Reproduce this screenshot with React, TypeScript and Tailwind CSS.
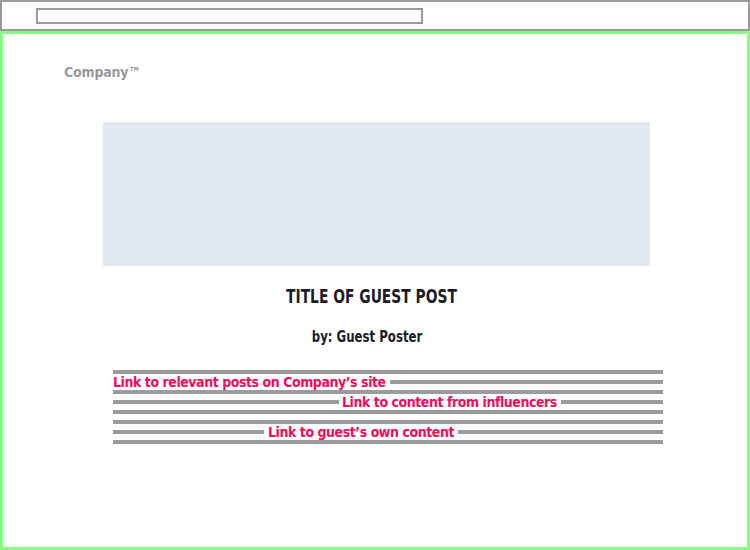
import React from "react";

const FONT = { fontFamily: '"DejaVu Sans Condensed", "DejaVu Sans", sans-serif', fontStretch: "condensed" as const };

function Bar({ className = "" }: { className?: string }) {
  return <div className={`h-[4px] bg-[#9b9b9b] ${className}`} />;
}

function LinkText({ children }: { children: React.ReactNode }) {
  return (
    <span className="text-[14px] font-bold leading-none tracking-[-0.45px] text-[#f7085a] whitespace-nowrap" style={FONT}>
      {children}
    </span>
  );
}

export default function App() {
  return (
    <div className="w-[750px] h-[550px] flex flex-col bg-white">
      <div className="h-[31px] border-2 border-[#999999] flex-none">
        <div className="ml-[34px] mt-[6px] w-[387px] h-[16px] border-2 border-[#999999]" />
      </div>
      <div className="flex-1 border-[3px] border-[#86fc86] flex flex-col">
        <div className="ml-[61px] mt-[31px] text-[14px] font-bold leading-none tracking-[-0.2px] text-[#999999]" style={FONT}>
          Company™
        </div>
        <div className="ml-[100px] mt-[43px] w-[547px] h-[144px] bg-[#e1e8f0]" />
        <div className="ml-[100px] mt-[21px] w-[537px] text-center text-[19px] font-bold leading-none text-[#1b1b2a] scale-x-[0.81]" style={FONT}>
          TITLE OF GUEST POST
        </div>
        <div className="ml-[100px] mt-[24px] w-[528px] text-center text-[15px] font-bold leading-none text-[#1b1b2a] scale-x-[0.87]" style={FONT}>
          by: Guest Poster
        </div>
        <div className="ml-[110px] mt-[25px] w-[550px] flex flex-col gap-[6px]">
          <Bar />
          <div className="h-[4px] flex items-center">
            <LinkText>Link to relevant posts on Company’s site</LinkText>
            <Bar className="flex-1 ml-[4px]" />
          </div>
          <Bar />
          <div className="h-[4px] flex items-center">
            <Bar className="w-[226px] mr-[3px]" />
            <LinkText>Link to content from influencers</LinkText>
            <Bar className="flex-1 ml-[4px]" />
          </div>
          <Bar />
          <Bar />
          <div className="h-[4px] flex items-center">
            <Bar className="w-[151px] mr-[4px]" />
            <LinkText>Link to guest’s own content</LinkText>
            <Bar className="flex-1 ml-[4px]" />
          </div>
          <Bar />
        </div>
      </div>
    </div>
  );
}
